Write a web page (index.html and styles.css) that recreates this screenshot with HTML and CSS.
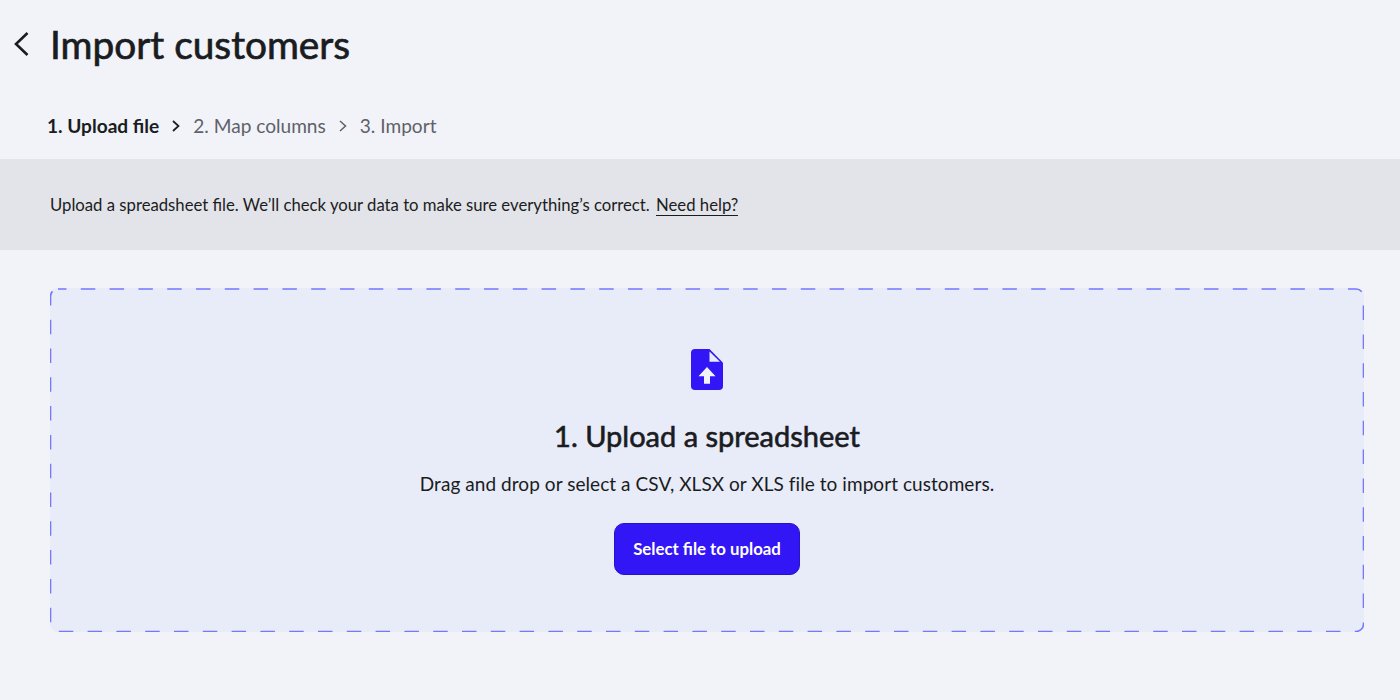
FILE: index.html
```html
<!DOCTYPE html>
<html lang="en">
<head>
<meta charset="utf-8">
<title>Import customers</title>
<link rel="stylesheet" href="styles.css">
</head>
<body>
<header class="header">
  <a class="back" href="#" aria-label="Back">
    <svg width="18" height="26" viewBox="0 0 18 26" fill="none"><path d="M15.5 2 L4 13 L15.5 24" stroke="#1a1c21" stroke-width="2.6"/></svg>
  </a>
  <h1 class="title">Import customers</h1>
</header>
<nav class="steps">
  <span class="step step-active">1. Upload file</span>
  <svg class="chev" width="10" height="14" viewBox="0 0 10 14" fill="none"><path d="M2 2 L7.5 7 L2 12" stroke="#1a1c21" stroke-width="1.7"/></svg>
  <span class="step">2. Map columns</span>
  <svg class="chev" width="10" height="14" viewBox="0 0 10 14" fill="none"><path d="M2 2 L7.5 7 L2 12" stroke="#5f6168" stroke-width="1.5"/></svg>
  <span class="step">3. Import</span>
</nav>
<section class="banner">
  <p class="banner-text">Upload a spreadsheet file. We’ll check your data to make sure everything’s correct. <a class="help" href="#">Need help?</a></p>
</section>
<main class="main">
  <div class="drop">
    <svg class="drop-border" width="1314" height="344" viewBox="0 0 1314 344" fill="none"><rect x="0.5" y="1" width="1313" height="342.5" rx="7.5" stroke="#7478ff" stroke-width="1.6" stroke-dasharray="14.5 14.3" stroke-dashoffset="6"/></svg>
    <svg class="file-icon" width="32" height="41" viewBox="0 0 32 40" preserveAspectRatio="none">
      <path d="M4 0 H18.5 L32 13.5 V36 a4 4 0 0 1 -4 4 H4 a4 4 0 0 1 -4 -4 V4 a4 4 0 0 1 4 -4 Z" fill="#3316f5"/>
      <path d="M18.5 2.5 V12.5 H29 Z" fill="#e8ebf8"/>
      <path d="M16 17.5 L24.5 26.5 H19 V34 H13 V26.5 H7.5 Z" fill="#f1f3fb"/>
    </svg>
    <h2 class="drop-title">1. Upload a spreadsheet</h2>
    <p class="drop-text">Drag and drop or select a CSV, XLSX or XLS file to import customers.</p>
    <button class="btn" type="button">Select file to upload</button>
  </div>
</main>
</body>
</html>
```
FILE: styles.css
```css
* { box-sizing: border-box; }
html, body { margin: 0; height: 700px; overflow: hidden; }
body {
  background: #f1f3f9;
  color: #1a1c21;
  font-family: Lato, "Liberation Sans", sans-serif;
}
.header {
  display: flex;
  align-items: center;
  height: 90px;
  padding-left: 12px;
}
.back { display: flex; width: 38px; margin-top: -2px; }
.title {
  margin: 0;
  font-size: 38.8px;
  line-height: 44px;
  font-weight: 400;
  -webkit-text-stroke: 0.7px #1a1c21;
  margin-top: -2px;
}
.steps {
  display: flex;
  align-items: center;
  height: 69px;
  padding: 2px 0 0 47px;
  font-size: 19.1px;
  color: #5f6168;
}
.step-active { font-weight: 700; color: #1a1c21; }
.chev { margin: 0 12px; }
.banner {
  display: flex;
  align-items: center;
  height: 91px;
  padding-left: 50px;
  background: #e3e4e9;
}
.banner-text { margin: 0; font-size: 16.72px; line-height: 24px; }
.help { color: inherit; text-decoration: none; border-bottom: 1px solid #1a1c21; margin-left: 2px; }
.main { padding: 38px 36px 0 50px; }
.drop {
  position: relative;
  display: flex;
  flex-direction: column;
  align-items: center;
  height: 344px;
  padding-top: 61px;
  background: #e8ebf8;
  border-radius: 8px;
}
.drop-border { position: absolute; left: 0; top: 0; }
.file-icon { display: block; }
.drop-title {
  margin: 27px 0 0;
  font-size: 29px;
  line-height: 38px;
  font-weight: 400;
  -webkit-text-stroke: 0.6px #1a1c21;
}
.drop-text { margin: 16px 0 0; font-size: 19px; line-height: 26px; letter-spacing: 0.06px; }
.btn {
  margin-top: 26px;
  width: 186px;
  height: 52px;
  padding-bottom: 2px;
  border: 1px solid #2a12c9;
  border-radius: 10px;
  background: #3316f5;
  color: #fff;
  font-family: inherit;
  font-size: 16.8px;
  font-weight: 700;
}
```
